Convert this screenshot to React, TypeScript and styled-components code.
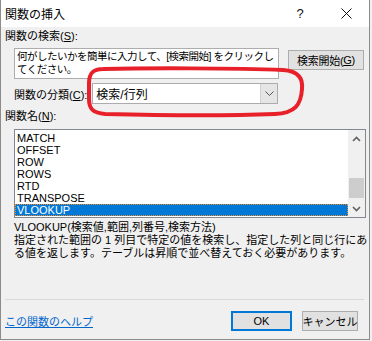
import styled, { createGlobalStyle } from "styled-components";

const GlobalStyle = createGlobalStyle`
  html, body {
    margin: 0;
    padding: 0;
    background: #f0f0f0;
  }
  body {
    font-family: "Liberation Sans", "Noto Sans CJK JP", sans-serif;
    font-size: 11px;
    color: #000;
  }
`;

const Window = styled.div`
  position: relative;
  width: 370px;
  height: 340px;
  box-sizing: border-box;
  border: 1px solid #8c8c8c;
  border-top: none;
  background: #f0f0f0;
  display: flex;
  flex-direction: column;
  overflow: hidden;
`;

const TitleBar = styled.div`
  height: 27px;
  flex: none;
  background: #fff;
  display: flex;
  align-items: center;
  padding-left: 4px;
  font-size: 12px;
`;

const Title = styled.span`
  flex: 1;
`;

const TitleButton = styled.div`
  width: 46px;
  height: 27px;
  display: flex;
  align-items: center;
  justify-content: center;
  font-size: 13px;
  color: #111;
`;

const Body = styled.div`
  flex: 1;
  display: flex;
  flex-direction: column;
  padding: 0 4px;
`;

const Label = styled.div<{ $top: number }>`
  margin-top: ${(p) => p.$top}px;
  line-height: 14px;
  height: 14px;
  white-space: nowrap;
`;

const Key = styled.span`
  text-decoration: underline;
`;

const Row = styled.div<{ $top: number }>`
  display: flex;
  align-items: flex-start;
  margin-top: ${(p) => p.$top}px;
  padding-left: 9px;
`;

const SearchBox = styled.div`
  width: 265px;
  height: 31px;
  box-sizing: border-box;
  border: 1px solid #adadad;
  background: #fff;
  padding: 1px 1px 1px 2px;
  line-height: 13px;
  font-size: 10.5px;
  letter-spacing: -0.5px;
  white-space: nowrap;
  overflow: hidden;
`;

const Button = styled.div<{ $w: number; $primary?: boolean }>`
  width: ${(p) => p.$w}px;
  height: 20px;
  box-sizing: border-box;
  border: ${(p) => (p.$primary ? "2px solid #0078d7" : "1px solid #adadad")};
  background: #e1e1e1;
  display: flex;
  align-items: center;
  justify-content: center;
  white-space: nowrap;
  font-size: 11px;
`;

const SearchButton = styled(Button)`
  margin-left: 9px;
  margin-top: 2px;
  letter-spacing: -0.3px;
`;

const CategoryRow = styled.div`
  display: flex;
  align-items: center;
  margin-top: 4px;
  padding-left: 9px;
  height: 21px;
`;

const Select = styled.div`
  margin-left: 5px;
  width: 186px;
  height: 21px;
  box-sizing: border-box;
  border: 1px solid #acacac;
  background: #fff;
  display: flex;
  align-items: center;
  padding-left: 3px;
  font-size: 12px;
`;

const SelectValue = styled.span`
  flex: 1;
`;

const SelectArrow = styled.div`
  width: 16px;
  height: 19px;
  background: #e5e5e5;
  border-left: 1px solid #d0d0d0;
  display: flex;
  align-items: center;
  justify-content: center;
`;

const ListBox = styled.div`
  margin-top: 6px;
  margin-left: 9px;
  width: 352px;
  height: 89px;
  box-sizing: border-box;
  border: 1px solid #828790;
  background: #fff;
  display: flex;
`;

const Items = styled.div`
  flex: 1;
  padding-top: 2px;
`;

const Item = styled.div<{ $selected?: boolean }>`
  height: 12px;
  line-height: 12px;
  padding-left: 2px;
  box-sizing: border-box;
  font-size: 11px;
  background: ${(p) => (p.$selected ? "#0078d7" : "transparent")};
  color: ${(p) => (p.$selected ? "#fff" : "#000")};
  outline: ${(p) => (p.$selected ? "1px dotted #f08a24" : "none")};
  outline-offset: -1px;
`;

const ScrollBar = styled.div`
  width: 17px;
  background: #f0f0f0;
  display: flex;
  flex-direction: column;
  align-items: center;
`;

const ScrollArrow = styled.div`
  height: 17px;
  width: 17px;
  display: flex;
  align-items: center;
  justify-content: center;
`;

const ScrollTrack = styled.div`
  flex: 1;
  width: 17px;
  display: flex;
  flex-direction: column;
  justify-content: flex-end;
`;

const Thumb = styled.div`
  height: 20px;
  width: 15px;
  margin: 0 1px 2px;
  background: #cdcdcd;
`;

const Syntax = styled.div`
  margin-top: 2px;
  margin-left: 9px;
  line-height: 14px;
  white-space: nowrap;
`;

const Description = styled.div`
  margin-left: 9px;
  line-height: 13px;
`;

const Line = styled.div`
  white-space: nowrap;
`;

const Separator = styled.div`
  margin-top: auto;
  height: 1px;
  margin-right: 1px;
  background: #d9d9d9;
`;

const Footer = styled.div`
  display: flex;
  align-items: center;
  height: 20px;
  margin: 11px 7px 8px 0;
  gap: 10px;
`;

const HelpLink = styled.a`
  flex: 1;
  color: #0066cc;
  text-decoration: underline;
  cursor: pointer;
`;

const Annotation = styled.svg`
  position: absolute;
  left: 84px;
  top: 65px;
  pointer-events: none;
`;

const functions = ["MATCH", "OFFSET", "ROW", "ROWS", "RTD", "TRANSPOSE", "VLOOKUP"];

export default function App() {
  return (
    <>
      <GlobalStyle />
      <Window>
        <TitleBar>
          <Title>関数の挿入</Title>
          <TitleButton>?</TitleButton>
          <TitleButton>
            <svg width="11" height="11" viewBox="0 0 11 11">
              <path d="M0.5 0.5 L10.5 10.5 M10.5 0.5 L0.5 10.5" stroke="#111" strokeWidth="1" />
            </svg>
          </TitleButton>
        </TitleBar>
        <Body>
          <Label $top={2}>
            関数の検索(<Key>S</Key>):
          </Label>
          <Row $top={5}>
            <SearchBox>
              何がしたいかを簡単に入力して、[検索開始] をクリックし
              <br />
              てください。
            </SearchBox>
            <SearchButton $w={76}>
              検索開始(<Key>G</Key>)
            </SearchButton>
          </Row>
          <CategoryRow>
            <span>
              関数の分類(<Key>C</Key>):
            </span>
            <Select>
              <SelectValue>検索/行列</SelectValue>
              <SelectArrow>
                <svg width="9" height="5" viewBox="0 0 9 5">
                  <path d="M0.5 0.5 L4.5 4.5 L8.5 0.5" stroke="#555" fill="none" />
                </svg>
              </SelectArrow>
            </Select>
          </CategoryRow>
          <Label $top={5}>
            関数名(<Key>N</Key>):
          </Label>
          <ListBox>
            <Items>
              {functions.map((f) => (
                <Item key={f} $selected={f === "VLOOKUP"}>
                  {f}
                </Item>
              ))}
            </Items>
            <ScrollBar>
              <ScrollArrow>
                <svg width="9" height="6" viewBox="0 0 9 6">
                  <path d="M1 5 L4.5 1.5 L8 5" stroke="#606060" strokeWidth="1.6" fill="none" />
                </svg>
              </ScrollArrow>
              <ScrollTrack>
                <Thumb />
              </ScrollTrack>
              <ScrollArrow>
                <svg width="9" height="6" viewBox="0 0 9 6">
                  <path d="M1 1 L4.5 4.5 L8 1" stroke="#606060" strokeWidth="1.6" fill="none" />
                </svg>
              </ScrollArrow>
            </ScrollBar>
          </ListBox>
          <Syntax>VLOOKUP(検索値,範囲,列番号,検索方法)</Syntax>
          <Description>
            <Line>指定された範囲の 1 列目で特定の値を検索し、指定した列と同じ行にあ</Line>
            <Line>る値を返します。テーブルは昇順で並べ替えておく必要があります。</Line>
          </Description>
          <Separator />
          <Footer>
            <HelpLink>この関数のヘルプ</HelpLink>
            <Button $w={61} $primary>
              OK
            </Button>
            <Button $w={56}>キャンセル</Button>
          </Footer>
        </Body>
        <Annotation width="222" height="54" viewBox="0 0 222 54">
          <path
            d="M18 4 C60 3 150 3 198 5 C214 6 218 14 217 24 C216 40 210 48 190 49 C140 51 60 50 20 49 C8 48 4 44 4 34 L4 18 C4 8 8 4 18 4 Z"
            stroke="#e8202a"
            strokeWidth="4"
            fill="none"
          />
        </Annotation>
      </Window>
    </>
  );
}
